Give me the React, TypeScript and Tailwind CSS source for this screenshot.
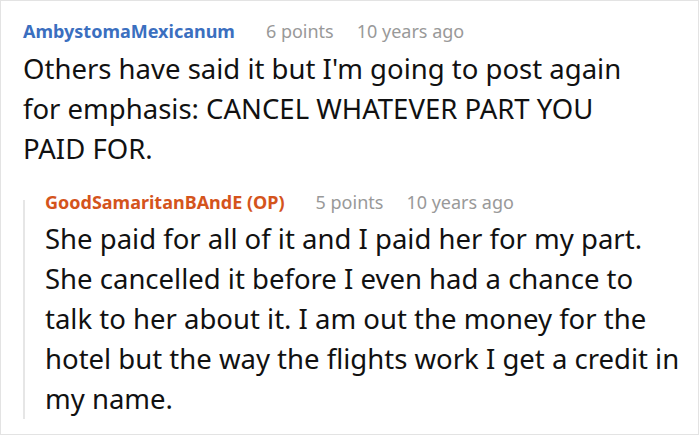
export default function App() {
  return (
    <div className="w-[699px] h-[435px] border border-[#e3e3e3] bg-white overflow-hidden font-['Noto_Sans',sans-serif] text-[#111]">
      <div className="pl-[22px] pt-[16px]">
        <div className="flex items-baseline text-[18px] leading-[28px]">
          <span className="font-bold text-[#3b6fbf]">AmbystomaMexicanum</span>
          <span className="ml-[31px] text-[#999]">6 points</span>
          <span className="ml-[23px] text-[#999]">10 years ago</span>
        </div>
        <p className="mt-[4px] w-[620px] text-[27.5px] leading-[40px]">
          Others have said it but I'm going to post again for emphasis: CANCEL WHATEVER PART YOU PAID FOR.
        </p>

        <div className="mt-[31px] flex flex-col border-l-2 border-[#e6e6e6] pl-[20px]">
          <div className="-mt-[12px] flex items-baseline text-[18px] leading-[28px]">
            <span className="font-bold text-[#d4541c]">GoodSamaritanBAndE (OP)</span>
            <span className="ml-[31px] text-[#999]">5 points</span>
            <span className="ml-[23px] text-[#999]">10 years ago</span>
          </div>
          <p className="mt-[3px] w-[650px] whitespace-nowrap text-[27.5px] leading-[40px]">
            She paid for all of it and I paid her for my part.
            <br />
            She cancelled it before I even had a chance to
            <br />
            talk to her about it. I am out the money for the
            <br />
            hotel but the way the flights work I get a credit in
            <br />
            my name.
          </p>
        </div>
      </div>
    </div>
  );
}
